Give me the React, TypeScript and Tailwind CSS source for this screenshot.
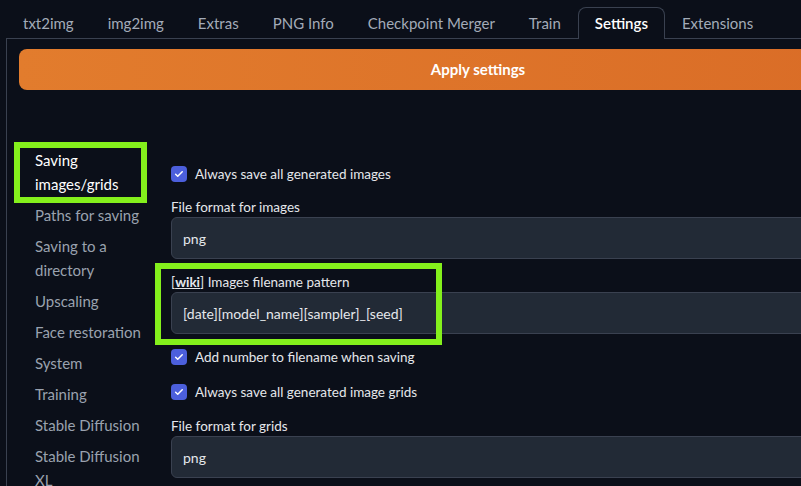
import React from "react";

const tabs = [
  "txt2img",
  "img2img",
  "Extras",
  "PNG Info",
  "Checkpoint Merger",
  "Train",
  "Settings",
  "Extensions",
];

const sections = [
  "Saving images/grids",
  "Paths for saving",
  "Saving to a directory",
  "Upscaling",
  "Face restoration",
  "System",
  "Training",
  "Stable Diffusion",
  "Stable Diffusion XL",
];

const Check = ({ label, className = "" }: { label: string; className?: string }) => (
  <label className={`flex items-center gap-2 h-4 ${className}`}>
    <span className="w-4 h-4 rounded-[4px] bg-[#4c5fdc] flex items-center justify-center">
      <svg viewBox="0 0 16 16" className="w-3 h-3" fill="none">
        <path d="M3.5 8.3l2.8 2.7 6-6" stroke="white" strokeWidth="2" strokeLinecap="round" strokeLinejoin="round" />
      </svg>
    </span>
    <span className="text-[13.5px] text-[#e5e7eb]">{label}</span>
  </label>
);

const TextBox = ({ value, className = "" }: { value: string; className?: string }) => (
  <div
    className={`h-[42px] rounded-md border border-[#3a4150] bg-[#222a36] px-[11px] flex items-center text-[14px] text-[#e5e7eb] ${className}`}
  >
    {value}
  </div>
);

const App = () => {
  return (
    <div className="w-[801px] h-[486px] overflow-hidden bg-[#0b0f19] font-['Lato',sans-serif]">
      <div className="w-[960px]">
        <nav className="flex pl-[6px] pt-[7px] -mb-px relative z-10">
          {tabs.map((t) =>
            t === "Settings" ? (
              <div
                key={t}
                className="h-[32px] px-[16px] flex items-center border border-b-0 border-[#3a4150] rounded-t-lg bg-[#0b0f19] text-[15px] font-semibold text-white"
              >
                {t}
              </div>
            ) : (
              <div
                key={t}
                className="h-[32px] px-[17px] flex items-center text-[15px] text-[#a3abb8]"
              >
                {t}
              </div>
            ),
          )}
        </nav>

        <div className="ml-[6px] border-l border-t border-[#3a4150] px-3 pt-[10px]">
          <button className="w-[918px] h-[41px] rounded-lg bg-gradient-to-r from-[#e27c2d] to-[#d96b26] text-white font-bold text-[15px]">
            Apply settings
          </button>

          <div className="flex">
            <ul className="w-[152px] pt-[58px] pl-4 flex flex-col gap-[7px] text-[15px] leading-6">
              {sections.map((s, i) => (
                <li
                  key={s}
                  className={`relative ${i === 0 ? "text-white w-[100px]" : "text-[#9aa2af] w-[118px]"}`}
                >
                  {s}
                  {i === 0 && (
                    <span className="absolute -left-[21px] -top-[6px] w-[133px] h-[61px] border-[6px] border-[#84f01c]" />
                  )}
                </li>
              ))}
            </ul>

            <div className="flex-1 pt-[76px]">
              <Check label="Always save all generated images" />

              <div className="mt-[15px] text-[13.5px] leading-5 text-[#e5e7eb]">File format for images</div>
              <TextBox value="png" />

              <div className="relative mt-[13px]">
                <div className="text-[13.5px] leading-5 text-[#e5e7eb]">
                  [<span className="font-bold underline">wiki</span>] Images filename pattern
                </div>
                <TextBox value="[date][model_name][sampler]_[seed]" className="h-[41px]" />
                <span className="absolute -left-[16px] -top-[9px] w-[287px] h-[82px] border-[6px] border-[#84f01c]" />
              </div>

              <Check label="Add number to filename when saving" className="mt-[15px]" />
              <Check label="Always save all generated image grids" className="mt-[19px]" />

              <div className="mt-[16px] text-[13.5px] leading-5 text-[#e5e7eb]">File format for grids</div>
              <TextBox value="png" className="h-[41px]" />
            </div>
          </div>
        </div>
      </div>
    </div>
  );
};

export default App;
